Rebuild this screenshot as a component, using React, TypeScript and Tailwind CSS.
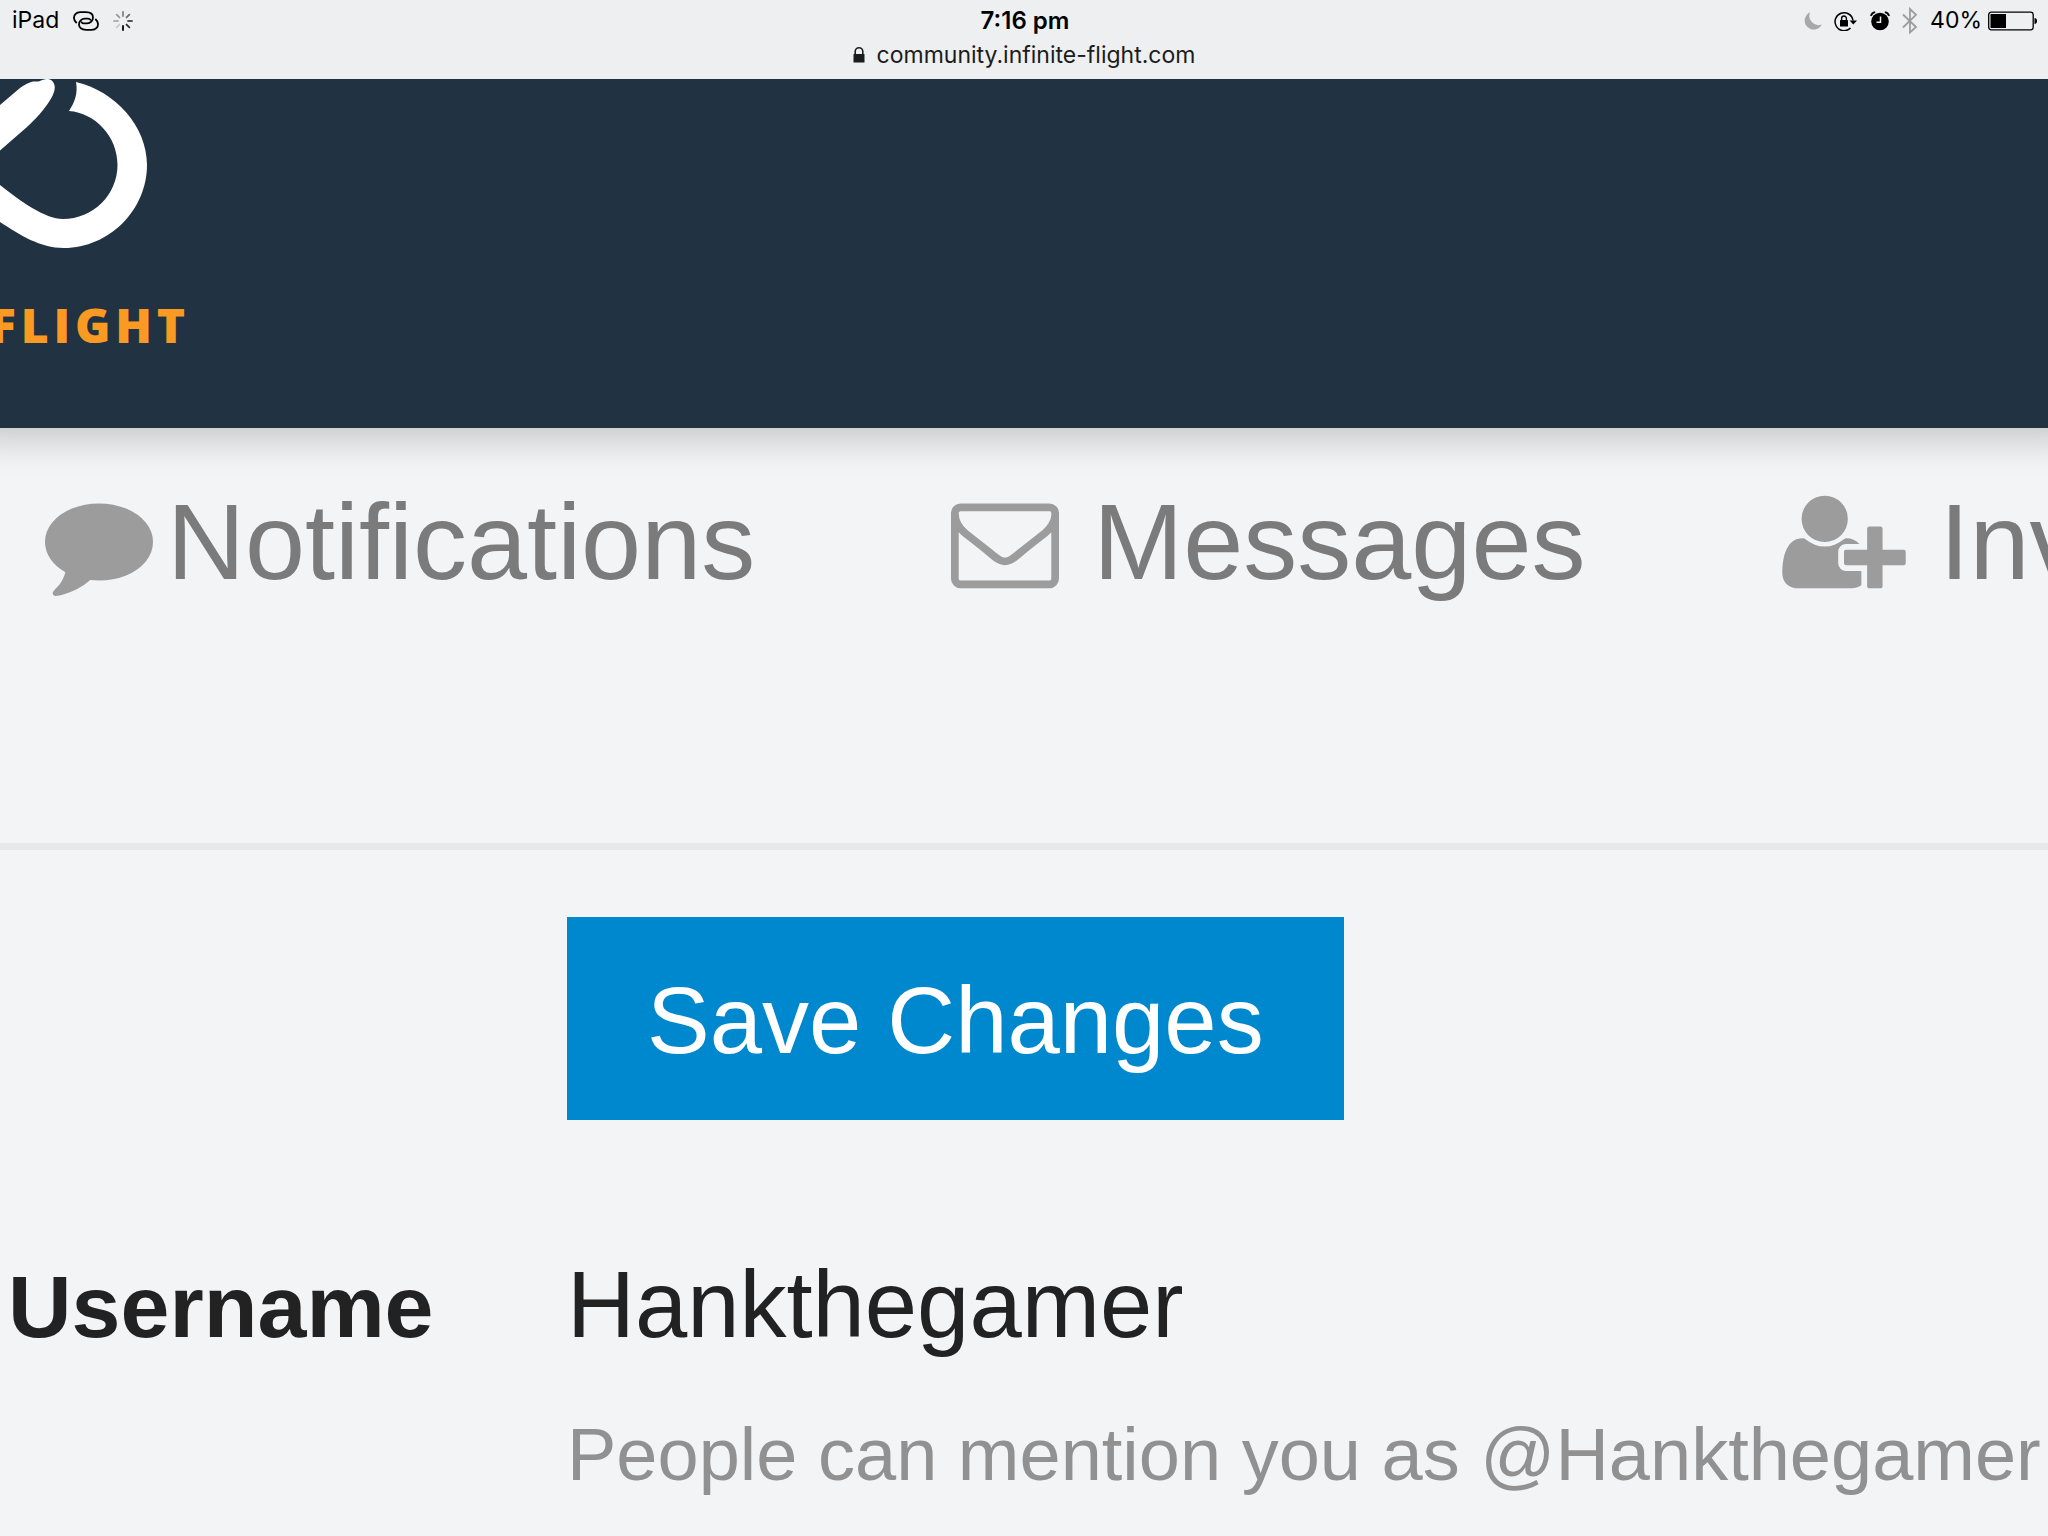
import type { ReactNode } from 'react'
import clsx from 'clsx'

const SPOKES = [
  { angle: 0,   opacity: 0.45 },
  { angle: 45,  opacity: 0.55 },
  { angle: 90,  opacity: 0.65 },
  { angle: 135, opacity: 0.8  },
  { angle: 180, opacity: 1    },
  { angle: 225, opacity: 0.15 },
  { angle: 270, opacity: 0.25 },
  { angle: 315, opacity: 0.35 },
]

function HotspotIcon() {
  return (
    <svg viewBox="0 0 26 20" className="w-[26px] h-5" fill="none" stroke="currentColor" strokeWidth="1.800" strokeLinecap="round">
      <path d="M3.200 11.500C.400 9 .400 5.200 2.400 3.100C3.700 1.700 5.300 1.200 7.300 1.200H13c4.500 0 7 2.200 7 5.400S17.500 12.300 14 12.300H11c-1.200 0-2-.4-2.300-1" />
      <path d="M22.800 8.500c2.800 2.500 2.800 6.300 .8 8.400c-1.300 1.400-2.900 1.900-4.900 1.900H13c-4.500 0-7-2.200-7-5.400S8.500 7.700 12 7.700h3c1.200 0 2 .4 2.300 1" />
    </svg>
  )
}

function SpinnerIcon() {
  return (
    <svg viewBox="-10 -10 20 20" className="size-5" stroke="currentColor" strokeWidth="1.800" strokeLinecap="round">
      {SPOKES.map(s => (
        <line key={s.angle} x1="0" y1="-9" x2="0" y2="-5" transform={`rotate(${s.angle})`} opacity={s.opacity} />
      ))}
    </svg>
  )
}

function LockIcon() {
  return (
    <svg viewBox="0 0 12 16" className="w-3 h-4">
      <rect x="0.500" y="7" width="11" height="8.500" rx="0.500" fill="currentColor" />
      <path d="M2.200 7.500V4.600a3.800 3.800 0 0 1 7.600 0v2.900" fill="none" stroke="currentColor" strokeWidth="1.600" />
    </svg>
  )
}

function MoonIcon() {
  return (
    <svg viewBox="0 0 18 18" className="size-[18px] text-[#a6a8a9]">
      <path d="M6.200.300A9 9 0 1 0 17.900 12.300A9 9 0 0 1 6.200.300z" fill="currentColor" />
    </svg>
  )
}

function RotationLockIcon() {
  return (
    <svg viewBox="0 0 24 20" className="w-6 h-5">
      <path d="M16.500 17A9 9 0 1 1 19 9.500" fill="none" stroke="currentColor" strokeWidth="1.500" />
      <path d="M15.500 9.500h7.500l-3.700 4z" fill="currentColor" />
      <rect x="6" y="9" width="8" height="6.500" rx="0.500" fill="currentColor" />
      <path d="M7.600 9.500V7.400a2.400 2.400 0 0 1 4.800 0v2.100" fill="none" stroke="currentColor" strokeWidth="1.400" />
    </svg>
  )
}

function AlarmIcon() {
  return (
    <svg viewBox="0 0 20 20" className="size-5">
      <circle cx="10" cy="10.500" r="8.800" fill="currentColor" />
      <path d="M.800 4.800A6 6 0 0 1 5.200 1.200M19.200 4.800A6 6 0 0 0 14.800 1.200" fill="none" stroke="currentColor" strokeWidth="1.800" />
      <path d="M10.500 5.500V11.200H6.500" fill="none" stroke="#eeeff1" strokeWidth="1.500" />
    </svg>
  )
}

function BluetoothIcon() {
  return (
    <svg viewBox="0 0 16 28" className="w-4 h-7 text-[#9b9c9e]" fill="none" stroke="currentColor" strokeWidth="1.800">
      <path d="M1 7.500L14 20L8 25.500V2L14 7.800L1 20.500" />
    </svg>
  )
}

function BatteryIcon() {
  return (
    <svg viewBox="0 0 50 20" className="w-[50px] h-5">
      <rect x="0.700" y="1.200" width="44.500" height="17.600" rx="2.500" fill="none" stroke="currentColor" strokeWidth="1.300" />
      <rect x="2.500" y="3" width="15.500" height="14" fill="currentColor" />
      <path d="M46.500 7c1.500 0 2.500 1.200 2.500 3s-1 3-2.500 3z" fill="currentColor" />
    </svg>
  )
}

function CommentIcon() {
  return (
    <svg viewBox="0 0 1792 1792" className="size-[108px] shrink-0 text-[#9c9c9c]" fill="currentColor">
      <path d="M1792 896q0 174-120 321.500t-326 233-450 85.500q-70 0-145-8-198 175-460 242-49 14-114 22h-5q-15 0-27-10.500t-16-27.500v-1q-3-4-.5-12t2-10 4.500-9.500l6-9 7-8.500 8-9q7-8 31-34.500t34.500-38 31-39.500 32.500-51 27-59 26-76q-157-89-247.500-220t-90.500-281q0-174 120-321.500t326-233 450-85.500 450 85.500 326 233 120 321.500z" />
    </svg>
  )
}

function EnvelopeIcon() {
  return (
    <svg viewBox="0 0 1792 1792" className="size-[108px] shrink-0 text-[#9c9c9c]" fill="currentColor">
      <path d="M1664 1504v-768q-32 36-69 66-268 206-426 338-51 43-83 67t-86.500 48.500-102.500 24.500h-2q-48 0-102.500-24.500t-86.500-48.500-83-67q-158-132-426-338-37-30-69-66v768q0 13 9.500 22.500t22.500 9.500h1472q13 0 22.500-9.500t9.500-22.500zm0-1051v-24.500l-.5-13-3-12.500-5.500-9-9-7.500-14-2.500h-1472q-13 0-22.500 9.500t-9.500 22.500q0 168 147 284 193 152 401 317 6 5 35 29.500t46 37.500 44.500 31.500 50.500 27.500 43 9h2q20 0 43-9t50.500-27.500 44.500-31.500 46-37.500 35-29.500q208-165 401-317 54-43 100.500-115.500t46.500-131.500zm128-37v1088q0 66-47 113t-113 47h-1472q-66 0-113-47t-47-113v-1088q0-66 47-113t113-47h1472q66 0 113 47t47 113z" />
    </svg>
  )
}

function UserPlusIcon() {
  return (
    <svg viewBox="0 0 2048 1792" className="w-[124px] h-[108px] shrink-0 text-[#9c9c9c]" fill="currentColor">
      <path d="M704 896q-159 0-271.500-112.500t-112.500-271.500 112.500-271.500 271.500-112.500 271.500 112.500 112.500 271.500-112.500 271.500-271.500 112.500zm960 128h352q13 0 22.500 9.500t9.500 22.500v192q0 13-9.500 22.500t-22.500 9.500h-352v352q0 13-9.500 22.500t-22.500 9.500h-192q-13 0-22.500-9.500t-9.500-22.500v-352h-352q-13 0-22.500-9.500t-9.500-22.500v-192q0-13 9.500-22.500t22.500-9.500h352v-352q0-13 9.500-22.500t22.500-9.500h192q13 0 22.500 9.500t9.500 22.500v352zm-736 224q0 52 38 90t90 38h256v238q-68 50-171 50h-874q-121 0-194-69t-73-190q0-53 3.500-103.500t14-109 26.500-108.500 43-97.500 62-81 85.500-53.500 111.500-20q19 0 39 17 79 61 154.500 91.500t164.500 30.500 164.500-30.500 154.500-91.500q20-17 39-17 132 0 217 96h-223q-52 0-90 38t-38 90v192z" />
    </svg>
  )
}

function LogoMark() {
  return (
    <svg viewBox="0 0 148 170" className="w-[148px] h-[170px]" fill="#fff" aria-hidden>
      <path d="M76 3C115 12 147 47 147 86C147 131 109 169 64 169C40 169 20 156 0 143V106C20 122 45 140 63 140C93 140 117.500 116 117.500 86C117.500 57 95 34 69 32C75 23 78 14 76 3z" />
      <path d="M0 26L20 9C28 3 33 2 36 2.500C40 3 42 0 48 0C54 1 56 7 54 13C51 23 38 38 27 48L0 71.500z" />
    </svg>
  )
}

function StatusBar() {
  return (
    <div className="relative z-20 bg-[#eeeff1] pb-[10px] font-['Inter',sans-serif] text-[23px] text-black">
      <div className="grid h-[41px] grid-cols-[1fr_auto_1fr] items-center pl-3 pr-[10px]">
        <div className="flex items-center gap-[14px]">
          <span>iPad</span>
          <HotspotIcon />
          <SpinnerIcon />
        </div>
        <span className="text-2xl font-semibold">7:16 pm</span>
        <div className="flex items-center justify-end gap-3">
          <MoonIcon />
          <RotationLockIcon />
          <AlarmIcon />
          <BluetoothIcon />
          <div className="flex items-center gap-1.5">
            <span>40%</span>
            <BatteryIcon />
          </div>
        </div>
      </div>
      <div className="flex h-7 items-center justify-center gap-3 text-[#1c1c1c]">
        <LockIcon />
        <span>community.infinite-flight.com</span>
      </div>
    </div>
  )
}

function NavLink({ icon, label, tight }: { icon: ReactNode; label: string; tight?: boolean }) {
  return (
    <a href="#" className={clsx('flex shrink-0 items-center', tight ? 'gap-[14px]' : 'gap-[34px]')}>
      {icon}
      <span>{label}</span>
    </a>
  )
}

export default function App() {
  return (
    <div className="flex min-h-screen w-full flex-col overflow-hidden bg-[#f3f4f6] font-['Liberation_Sans',Arial,sans-serif]">
      <StatusBar />

      <header className="z-10 bg-[#213342] pb-[79px] shadow-[0_-20px_36px_30px_rgba(0,0,0,0.2)]">
        <LogoMark />
        <div className="mt-[52px] flex w-[190px] justify-end font-['Open_Sans',sans-serif] text-5xl leading-[48px] font-extrabold tracking-widest text-[#fb9a23]">
          FLIGHT
        </div>
      </header>

      <nav className="flex gap-[196px] overflow-hidden border-b-[7px] border-[#e8e8e8] pt-[60px] pb-[247px] pl-[45px] text-[108px] leading-[108px] text-[#7b7b7b]">
        <NavLink icon={<CommentIcon />} label="Notifications" tight />
        <NavLink icon={<EnvelopeIcon />} label="Messages" />
        <NavLink icon={<UserPlusIcon />} label="Invites" />
      </nav>

      <main className="grid grid-cols-[559px_1fr] pt-[67px] pb-9 pl-2 text-[#222]">
        <button className="col-start-2 justify-self-start bg-[#0088cf] px-20 pt-12 pb-11 text-[94px] leading-[111px] text-white">
          Save Changes
        </button>
        <div className="col-span-2 mt-[129px] grid grid-cols-subgrid items-baseline">
          <h2 className="text-[88px] leading-[112px] font-bold">Username</h2>
          <p className="text-[94px] leading-[112px]">Hankthegamer</p>
        </div>
        <p className="col-start-2 mt-12 text-[74px] leading-[88px] whitespace-nowrap text-[#919191]">
          People can mention you as @Hankthegamer
        </p>
      </main>
    </div>
  )
}
